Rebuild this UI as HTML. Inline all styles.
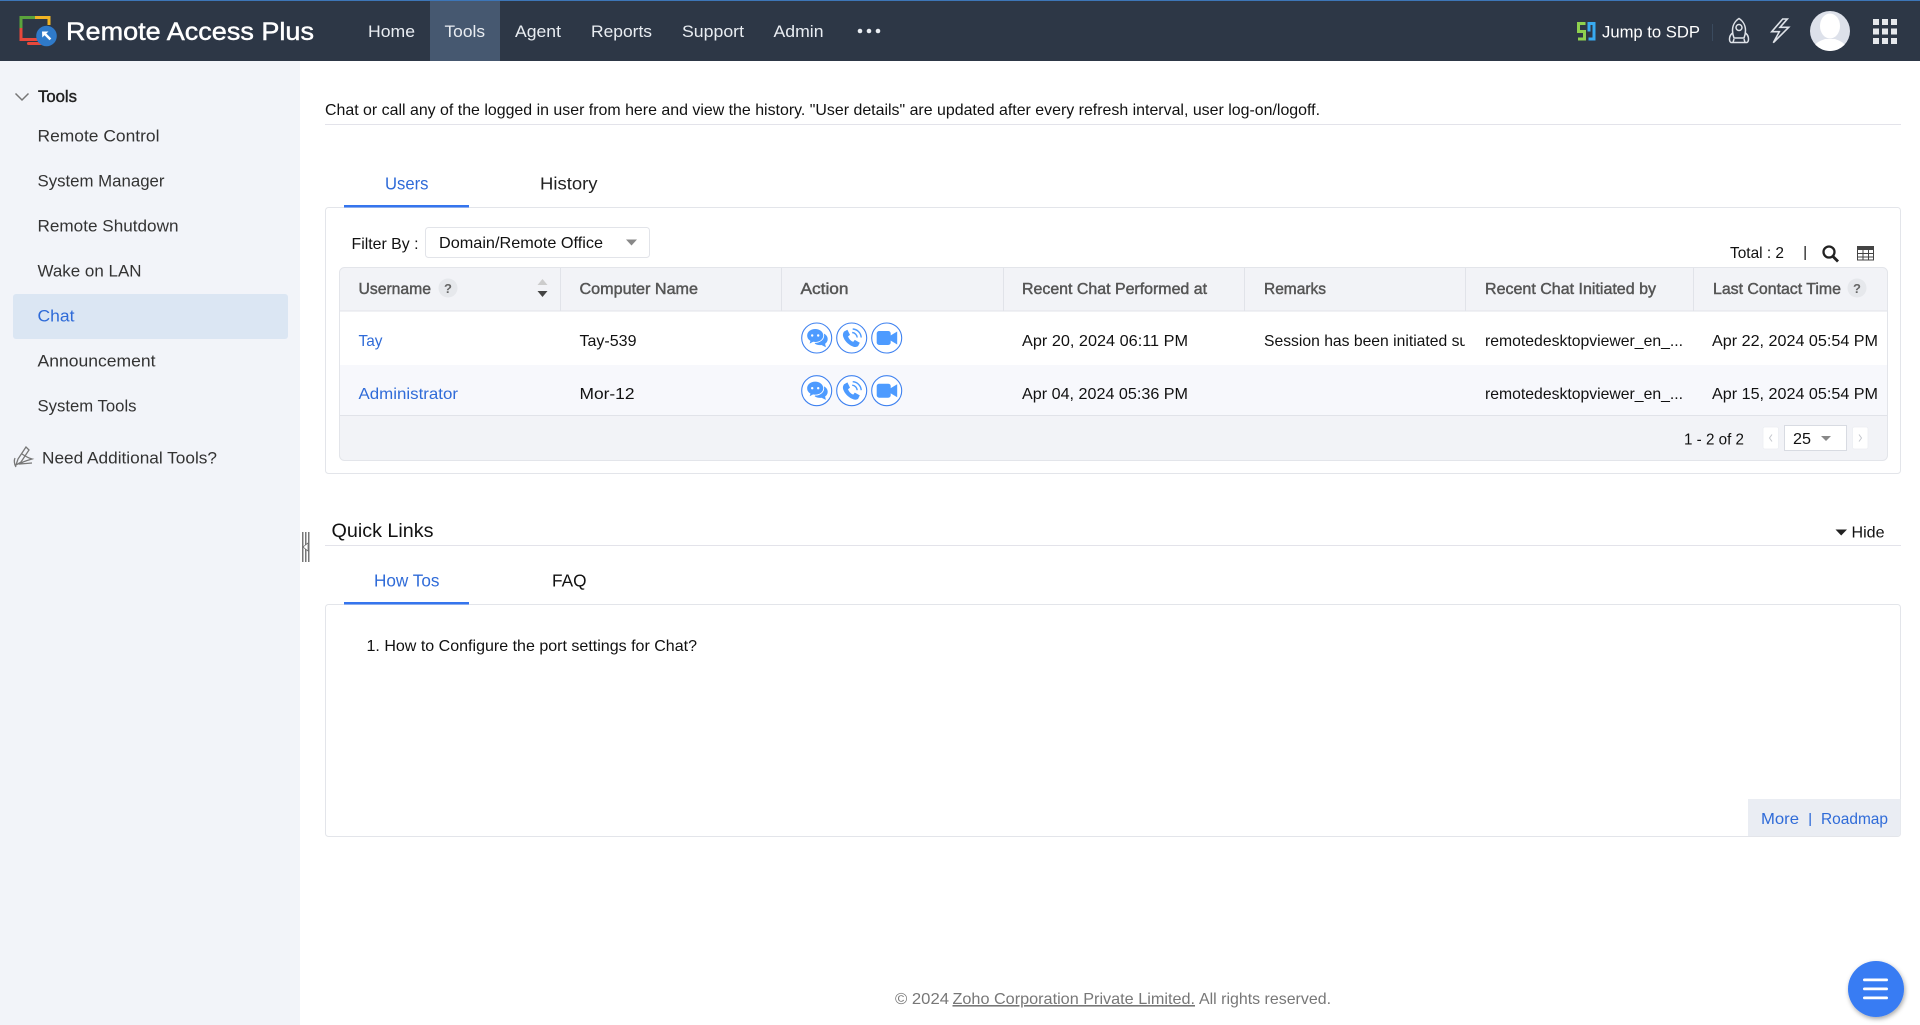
<!DOCTYPE html>
<html lang="en">
<head>
<meta charset="utf-8">
<title>Remote Access Plus - Chat</title>
<style>
html,body{margin:0;padding:0;width:1920px;height:1025px;overflow:hidden;background:#fff}
svg{display:block;font-family:"Liberation Sans",Arial,sans-serif}
text{white-space:pre}
.nav{font-size:17px;fill:#e9edf2}
.side{font-size:17px;fill:#333}
.b{font-size:16px;fill:#111}
.h{font-size:16px;fill:#555;stroke:#555;stroke-width:.45}
.l{fill:#2f6bd8}
</style>
</head>
<body>
<svg width="1920" height="1025" viewBox="0 0 1920 1025" xmlns="http://www.w3.org/2000/svg">
<defs>
<clipPath id="rem"><rect x="1264" y="320" width="201" height="40"/></clipPath>
<filter id="fs" x="-30%" y="-30%" width="160%" height="160%"><feDropShadow dx="1" dy="2" stdDeviation="2.5" flood-color="#000" flood-opacity=".35"/></filter>
<g id="ic-chat">
<circle r="15" fill="#fff" stroke="#3f82f0" stroke-width="1.1"/>
<path d="M4 -5c4 0 7 2.700 7 6 0 2-1 3.700-2.600 4.800l.8 3.400-4.400-2.200c-2.500.4-5-.2-6.800-1.500z" fill="#4d9bff"/>
<path d="M-1.500 -9.500c-4.800 0-8.500 3-8.500 7 0 2.300 1.200 4.300 3.200 5.600l-1 3.400 4.300-2.300c.7.100 1.300.2 2 .2 4.800 0 8.500-3 8.500-6.900s-3.700-7-8.500-7z" fill="#4d9bff" stroke="#fff" stroke-width=".9"/>
<circle cx="-4.500" cy="-2.500" r="1.200" fill="#fff"/><circle cx="1.500" cy="-2.500" r="1.200" fill="#fff"/>
</g>
<g id="ic-phone">
<circle r="15" fill="#fff" stroke="#3f82f0" stroke-width="1.1"/>
<path d="M-7.500 -6.500l3.200-1.800 2.600 5.200-2 1.600c1 2.600 2.600 4.300 5.200 5.400l1.600-2 5 2.800-1.600 3.200c-1 1.100-3.200 1.700-6.200.2-4.200-2.100-7.300-5.200-8.800-9.400-.6-2-.3-3.500 1-5.400z" fill="#4d9bff"/>
<path d="M.5 -5.500a5.500 5.500 0 0 1 5 5M1 -9a9 9 0 0 1 8.500 8.500" fill="none" stroke="#4d9bff" stroke-width="1.400"/>
</g>
<g id="ic-video">
<circle r="15" fill="#fff" stroke="#3f82f0" stroke-width="1.1"/>
<rect x="-10" y="-7" width="14" height="14" rx="2.500" fill="#4d9bff"/>
<path d="M3 -2L10.500 -6.500V6.500L3 2z" fill="#4d9bff"/>
</g>
</defs>

<!-- header -->
<rect width="1920" height="61" fill="#2d3746"/>
<rect width="1920" height="1" fill="#3d76b8"/>
<path d="M21 28V17.500H35" fill="none" stroke="#5aa33c" stroke-width="3"/>
<path d="M35 17.500H49V25" fill="none" stroke="#f1b424" stroke-width="3"/>
<path d="M21 28V39.500H38" fill="none" stroke="#e8483b" stroke-width="3"/>
<rect x="27" y="42" width="15" height="3" rx="1.500" fill="#e8483b"/>
<circle cx="46.500" cy="36" r="10.300" fill="#2f7ac9"/>
<path d="M42 31.500h6.500l-2.200 2 5 5-1.800 1.800-5-5-2.200 2.200z" fill="#fff"/>
<text x="66" y="40" font-size="25" fill="#fff" stroke="#fff" stroke-width=".45" textLength="248" lengthAdjust="spacingAndGlyphs">Remote Access Plus</text>

<rect x="430" y="1" width="70" height="60" fill="#465870"/>
<text class="nav" x="368" y="37" textLength="47" lengthAdjust="spacingAndGlyphs">Home</text>
<text class="nav" x="444.500" y="37" textLength="40.500" lengthAdjust="spacingAndGlyphs">Tools</text>
<text class="nav" x="515" y="37" textLength="46" lengthAdjust="spacingAndGlyphs">Agent</text>
<text class="nav" x="591" y="37" textLength="61" lengthAdjust="spacingAndGlyphs">Reports</text>
<text class="nav" x="682" y="37" textLength="62" lengthAdjust="spacingAndGlyphs">Support</text>
<text class="nav" x="773.500" y="37" textLength="50" lengthAdjust="spacingAndGlyphs">Admin</text>
<circle cx="860" cy="31" r="2.300" fill="#e9edf2"/><circle cx="869" cy="31" r="2.300" fill="#e9edf2"/><circle cx="878" cy="31" r="2.300" fill="#e9edf2"/>

<path d="M1585.500 23.500H1578.500V31.500H1584.500V39H1578" fill="none" stroke="#8fd14f" stroke-width="3"/>
<path d="M1589 31.500V23.500H1594V39H1588.500" fill="none" stroke="#38aaf0" stroke-width="3"/>
<text x="1602" y="37.500" font-size="17" fill="#fff" textLength="98" lengthAdjust="spacingAndGlyphs">Jump to SDP</text>
<rect x="1712" y="24" width="1" height="17" fill="#3a4a5e"/>
<g fill="none" stroke="#dfe3e9" stroke-width="1.500">
<path d="M1739 18.500c-4 2.500-6.500 7-6.500 12 0 2.500.5 5 1.500 7.500h10c1-2.500 1.500-5 1.500-7.500 0-5-2.500-9.500-6.500-12z"/>
<circle cx="1739" cy="27.500" r="3"/>
<path d="M1732.500 33c-1.800 1.500-3 3.500-3 6 0 1.500.5 3 1.500 3.500h2l1-3.500M1745.500 33c1.800 1.500 3 3.500 3 6 0 1.500-.5 3-1.500 3.500h-2l-1-3.500M1733 42.500h12"/>
<path d="M1782.700 19L1771.700 31.700H1779.300L1773.300 42.700 1788.700 27.300H1780L1787.300 19z" stroke-width="1.600"/>
</g>
<circle cx="1830" cy="31" r="20" fill="#dde1ea"/>
<clipPath id="av"><circle cx="1830" cy="31" r="20"/></clipPath>
<g clip-path="url(#av)" fill="#fff"><ellipse cx="1830" cy="26" rx="10" ry="12.500"/><path d="M1812 52c1-9 8-11 13-13h10c5 2 12 4 13 13z"/></g>
<g fill="#e6e8ec">
<rect x="1873" y="19" width="6" height="6"/><rect x="1882" y="19" width="6" height="6"/><rect x="1891" y="19" width="6" height="6"/>
<rect x="1873" y="28.500" width="6" height="6"/><rect x="1882" y="28.500" width="6" height="6"/><rect x="1891" y="28.500" width="6" height="6"/>
<rect x="1873" y="38" width="6" height="6"/><rect x="1882" y="38" width="6" height="6"/><rect x="1891" y="38" width="6" height="6"/>
</g>

<!-- sidebar -->
<rect y="61" width="300" height="964" fill="#f2f4f9"/>
<path d="M15.500 93.500L22 100l6.500-6.500" fill="none" stroke="#777" stroke-width="1.500"/>
<text x="38" y="102" font-size="17" fill="#222" stroke="#222" stroke-width=".45" textLength="39" lengthAdjust="spacingAndGlyphs">Tools</text>
<text class="side" x="37.500" y="141.500" textLength="122" lengthAdjust="spacingAndGlyphs">Remote Control</text>
<text class="side" x="37.500" y="186.500" textLength="127" lengthAdjust="spacingAndGlyphs">System Manager</text>
<text class="side" x="37.500" y="231.500" textLength="141" lengthAdjust="spacingAndGlyphs">Remote Shutdown</text>
<text class="side" x="37.500" y="276.500" textLength="104" lengthAdjust="spacingAndGlyphs">Wake on LAN</text>
<rect x="13" y="294" width="275" height="45" rx="3" fill="#dbe6f3"/>
<text x="37.500" y="321.500" font-size="17" fill="#2f6bd8" textLength="37" lengthAdjust="spacingAndGlyphs">Chat</text>
<text class="side" x="37.500" y="366.500" textLength="118" lengthAdjust="spacingAndGlyphs">Announcement</text>
<text class="side" x="37.500" y="411.500" textLength="99" lengthAdjust="spacingAndGlyphs">System Tools</text>
<g fill="none" stroke="#777" stroke-width="1.300">
<path d="M26 447L18 459l-2 6 5-3 8-12zM15 458c-1 2-1 6 1 9M22 454c3 2 6 4 10 5-3 1-9 2-12 5l12-1"/>
</g>
<text x="42" y="463.500" font-size="17" fill="#333" textLength="175" lengthAdjust="spacingAndGlyphs">Need Additional Tools?</text>
<g fill="#777"><rect x="302" y="532" width="1.500" height="30"/><rect x="305" y="532" width="1.500" height="30"/><rect x="308" y="532" width="1.500" height="30"/></g>
<path d="M308 543v8l-5-4z" fill="#fff" stroke="#666" stroke-width=".7"/>

<!-- main -->
<text class="b" x="325" y="115" textLength="995" lengthAdjust="spacingAndGlyphs">Chat or call any of the logged in user from here and view the history. "User details" are updated after every refresh interval, user log-on/logoff.</text>
<rect x="325" y="124" width="1576" height="1" fill="#e3e3ea"/>
<text x="385" y="189.500" font-size="17.500" fill="#2f6bd8" textLength="43.500" lengthAdjust="spacingAndGlyphs">Users</text>
<text x="540" y="189.500" font-size="17.500" fill="#222" textLength="57.500" lengthAdjust="spacingAndGlyphs">History</text>

<rect x="325.500" y="207.500" width="1575" height="266" rx="3" fill="#fff" stroke="#e3e5ea"/>
<rect x="344" y="205" width="125" height="2.500" fill="#3575ee"/>

<text class="b" x="351.500" y="249" textLength="67" lengthAdjust="spacingAndGlyphs">Filter By :</text>
<rect x="425.500" y="227.500" width="224" height="30" rx="3" fill="#fff" stroke="#e2e4e9"/>
<text class="b" x="439" y="248" textLength="164" lengthAdjust="spacingAndGlyphs">Domain/Remote Office</text>
<path d="M626 239.500h11l-5.500 6z" fill="#888"/>

<text class="b" x="1730" y="258" textLength="54" lengthAdjust="spacingAndGlyphs">Total : 2</text>
<rect x="1804.500" y="246" width="1.300" height="14" fill="#222"/>
<circle cx="1829" cy="252" r="5.500" fill="none" stroke="#222" stroke-width="2.300"/>
<path d="M1833 256.500l5 5" stroke="#222" stroke-width="2.800"/>
<rect x="1857.500" y="246.500" width="16" height="13.500" fill="#fff" stroke="#444"/>
<rect x="1857" y="246" width="17" height="4" fill="#444"/>
<path d="M1863 250v10M1868.500 250v10M1857 253.500h17M1857 257h17" stroke="#444" stroke-width="1"/>

<!-- table -->
<rect x="339.500" y="267.500" width="1548" height="193" rx="5" fill="#f2f3f7" stroke="#e3e5ea"/>
<rect x="340" y="311" width="1547" height="54" fill="#fff"/>
<rect x="340" y="365" width="1547" height="50" fill="#f7f8fc"/>
<rect x="340" y="310.500" width="1547" height="1" fill="#e1e3e9"/>
<rect x="340" y="415" width="1547" height="1" fill="#e1e3e9"/>
<g fill="#e1e3e9">
<rect x="560" y="268" width="1" height="43"/><rect x="781" y="268" width="1" height="43"/><rect x="1003" y="268" width="1" height="43"/><rect x="1244" y="268" width="1" height="43"/><rect x="1465" y="268" width="1" height="43"/><rect x="1693" y="268" width="1" height="43"/>
</g>
<text class="h" x="358.500" y="294" textLength="72.500" lengthAdjust="spacingAndGlyphs">Username</text>
<circle cx="448" cy="288" r="9.500" fill="#e6e8ec"/>
<text x="448" y="293" font-size="13" fill="#666" text-anchor="middle" font-weight="bold">?</text>
<path d="M542.500 279l5 6h-10z" fill="#ccc"/><path d="M542.500 297l5-6h-10z" fill="#444"/>
<text class="h" x="579.500" y="294" textLength="118.500" lengthAdjust="spacingAndGlyphs">Computer Name</text>
<text class="h" x="800.500" y="294" textLength="48" lengthAdjust="spacingAndGlyphs">Action</text>
<text class="h" x="1022" y="294" textLength="185" lengthAdjust="spacingAndGlyphs">Recent Chat Performed at</text>
<text class="h" x="1264" y="294" textLength="62" lengthAdjust="spacingAndGlyphs">Remarks</text>
<text class="h" x="1485" y="294" textLength="171" lengthAdjust="spacingAndGlyphs">Recent Chat Initiated by</text>
<text class="h" x="1713" y="294" textLength="128" lengthAdjust="spacingAndGlyphs">Last Contact Time</text>
<circle cx="1857" cy="288" r="9.500" fill="#e6e8ec"/>
<text x="1857" y="293" font-size="13" fill="#666" text-anchor="middle" font-weight="bold">?</text>

<text class="b l" x="358.500" y="346" textLength="24" lengthAdjust="spacingAndGlyphs">Tay</text>
<text class="b" x="579.500" y="346" textLength="57" lengthAdjust="spacingAndGlyphs">Tay-539</text>
<use href="#ic-chat" x="816.700" y="338"/><use href="#ic-phone" x="851.700" y="338"/><use href="#ic-video" x="886.700" y="338"/>
<text class="b" x="1022" y="346" textLength="166" lengthAdjust="spacingAndGlyphs">Apr 20, 2024 06:11 PM</text>
<g clip-path="url(#rem)"><text class="b" x="1264" y="346" textLength="212" lengthAdjust="spacingAndGlyphs">Session has been initiated suc</text></g>
<text class="b" x="1485" y="346" textLength="198" lengthAdjust="spacingAndGlyphs">remotedesktopviewer_en_...</text>
<text class="b" x="1712" y="346" textLength="166" lengthAdjust="spacingAndGlyphs">Apr 22, 2024 05:54 PM</text>

<text class="b l" x="358.500" y="399" textLength="99.500" lengthAdjust="spacingAndGlyphs">Administrator</text>
<text class="b" x="579.500" y="399" textLength="55" lengthAdjust="spacingAndGlyphs">Mor-12</text>
<use href="#ic-chat" x="816.700" y="390.700"/><use href="#ic-phone" x="851.700" y="390.700"/><use href="#ic-video" x="886.700" y="390.700"/>
<text class="b" x="1022" y="399" textLength="166" lengthAdjust="spacingAndGlyphs">Apr 04, 2024 05:36 PM</text>
<text class="b" x="1485" y="399" textLength="198" lengthAdjust="spacingAndGlyphs">remotedesktopviewer_en_...</text>
<text class="b" x="1712" y="399" textLength="166" lengthAdjust="spacingAndGlyphs">Apr 15, 2024 05:54 PM</text>

<text class="b" x="1684" y="444.500" textLength="60" lengthAdjust="spacingAndGlyphs">1 - 2 of 2</text>
<rect x="1763" y="427" width="15.500" height="22" rx="2" fill="#fff" stroke="#eceef2" stroke-width=".8"/>
<path d="M1772 434.500l-2.500 3.500 2.500 3.500" fill="none" stroke="#c4c7cd"/>
<rect x="1784.500" y="425.500" width="62" height="25" fill="#fff" stroke="#d8dbe2"/>
<text class="b" x="1793" y="444" textLength="18" lengthAdjust="spacingAndGlyphs">25</text>
<path d="M1821 436h10l-5 5z" fill="#888"/>
<rect x="1852.500" y="427" width="15.500" height="22" rx="2" fill="#fff" stroke="#eceef2" stroke-width=".8"/>
<path d="M1859 434.500l2.500 3.500-2.500 3.500" fill="none" stroke="#c4c7cd"/>

<!-- quick links -->
<text x="331.500" y="537" font-size="19" fill="#111" textLength="102" lengthAdjust="spacingAndGlyphs">Quick Links</text>
<path d="M1835.500 529.500h11.500l-5.800 6z" fill="#222"/>
<text class="b" x="1851.500" y="537.500" textLength="33" lengthAdjust="spacingAndGlyphs">Hide</text>
<rect x="325" y="545" width="1576" height="1" fill="#e3e3ea"/>
<text x="374" y="586.500" font-size="17.500" fill="#2f6bd8" textLength="65.500" lengthAdjust="spacingAndGlyphs">How Tos</text>
<text x="552" y="586.500" font-size="17.500" fill="#111" textLength="34.500" lengthAdjust="spacingAndGlyphs">FAQ</text>
<rect x="325.500" y="604.500" width="1575" height="232" rx="3" fill="#fff" stroke="#e3e5ea"/>
<rect x="344" y="602" width="125" height="2.500" fill="#3575ee"/>
<text class="b" x="366.500" y="651" fill="#222" textLength="330.500" lengthAdjust="spacingAndGlyphs">1. How to Configure the port settings for Chat?</text>
<path d="M1748 799H1900.500V833a3 3 0 0 1-3 3H1748z" fill="#eaedf3"/>
<text class="b l" x="1761" y="824" textLength="38" lengthAdjust="spacingAndGlyphs">More</text>
<rect x="1809.500" y="813" width="1.300" height="13" fill="#2f6bd8"/>
<text class="b l" x="1821" y="824" textLength="67" lengthAdjust="spacingAndGlyphs">Roadmap</text>

<!-- footer -->
<text x="895" y="1004" font-size="16" fill="#777" textLength="54" lengthAdjust="spacingAndGlyphs">© 2024</text>
<text x="952.500" y="1004" font-size="16" fill="#777" text-decoration="underline" textLength="242.500" lengthAdjust="spacingAndGlyphs">Zoho Corporation Private Limited.</text>
<text x="1199" y="1004" font-size="16" fill="#777" textLength="132" lengthAdjust="spacingAndGlyphs">All rights reserved.</text>
<circle cx="1876" cy="989" r="28" fill="#397bf3" filter="url(#fs)"/>
<g fill="#fff"><rect x="1863" y="978.500" width="25" height="2.800" rx="1.400"/><rect x="1863" y="987.500" width="25" height="2.800" rx="1.400"/><rect x="1863" y="996.500" width="25" height="2.800" rx="1.400"/></g>
</svg>
</body>
</html>
